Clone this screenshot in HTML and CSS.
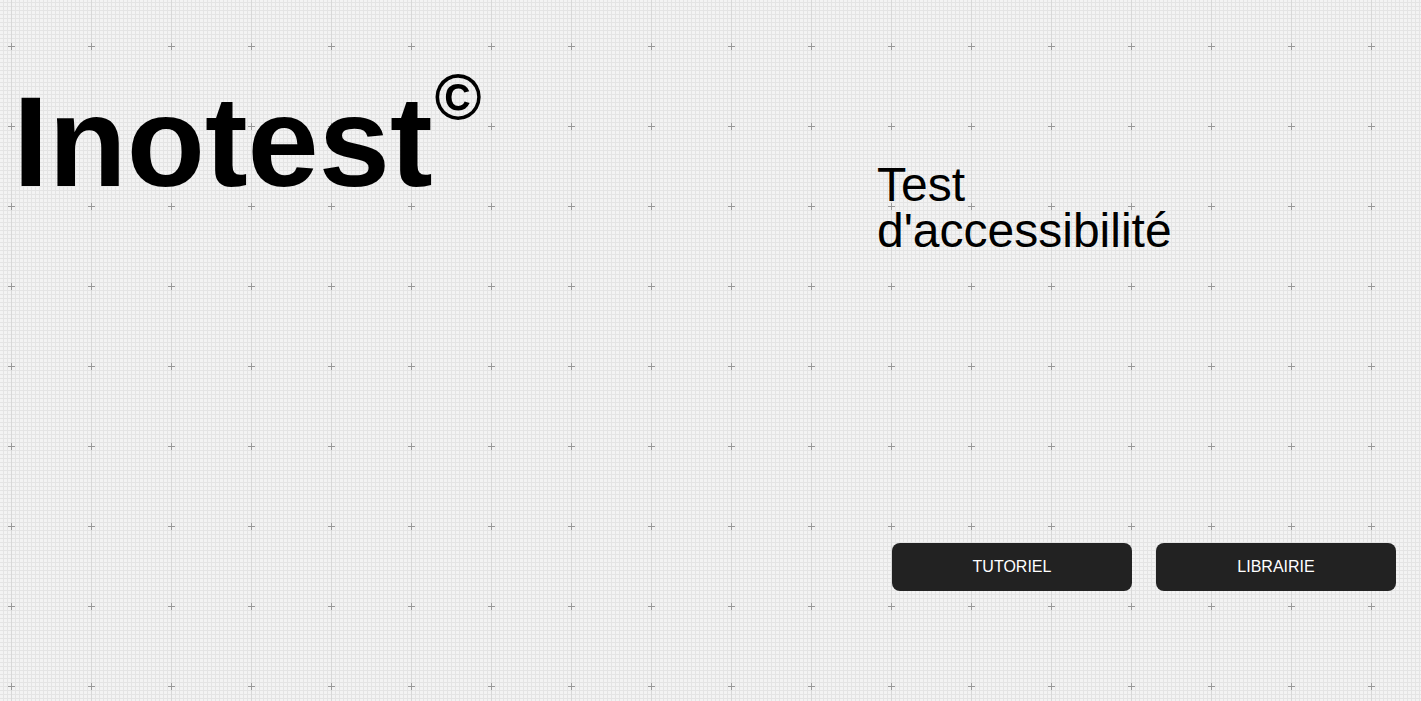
FILE: index.html
```html
<!DOCTYPE html>
<html lang="fr">
<head>
<meta charset="utf-8">
<title>Inotest</title>
<link rel="stylesheet" href="styles.css">
</head>
<body>
<main class="page">
  <section class="brand">
    <h1 class="title">Inotest<span class="copy">©</span></h1>
  </section>
  <section class="side">
    <p class="subtitle"><span class="line">Test</span><span class="line">d'accessibilité</span></p>
    <div class="actions">
      <button class="btn" type="button">TUTORIEL</button>
      <button class="btn" type="button">LIBRAIRIE</button>
    </div>
  </section>
</main>
</body>
</html>
```
FILE: styles.css
```css
html, body {
  margin: 0;
  padding: 0;
  height: 100%;
}

body {
  font-family: "Liberation Sans", Arial, sans-serif;
  color: #000;
  background-color: #f3f3f3;
  background-image:
    url("data:image/svg+xml,%3Csvg xmlns='http://www.w3.org/2000/svg' width='80' height='80'%3E%3Crect x='37' y='40' width='7' height='1' fill='%23999'/%3E%3Crect x='40' y='37' width='1' height='7' fill='%23999'/%3E%3C/svg%3E"),
    linear-gradient(to right, #d8d8d8 1px, transparent 1px),
    linear-gradient(to right, #e4e4e4 1px, transparent 1px),
    linear-gradient(to bottom, #e4e4e4 1px, transparent 1px);
  background-size: 80px 80px, 80px 80px, 4px 4px, 4px 4px;
  background-position: 51px 6px, 11px 0, 3px 0, 0 2px;
  overflow: hidden;
}

.page {
  display: flex;
  height: 701px;
  box-sizing: border-box;
}

.brand {
  width: 877px;
  flex: none;
  padding: 78px 0 0 13px;
  box-sizing: border-box;
}

.title {
  margin: 0;
  font-size: 128px;
  font-weight: 700;
  line-height: 128px;
  letter-spacing: 0;
  white-space: nowrap;
}

.copy {
  margin-left: 2px;
  font-size: 64px;
  font-weight: 700;
  line-height: 0;
  vertical-align: 67px;
}

.side {
  flex: 1;
  display: flex;
  flex-direction: column;
  padding: 162px 25px 110px 0;
  box-sizing: border-box;
}

.subtitle {
  margin: 0;
  font-size: 48px;
  line-height: 46px;
  font-weight: 400;
}

.line {
  display: block;
  height: 46px;
  overflow: visible;
}

.actions {
  margin-top: auto;
  display: flex;
  justify-content: flex-end;
  gap: 24px;
}

.btn {
  width: 240px;
  height: 48px;
  border: 0;
  border-radius: 8px;
  background: #222;
  color: #fff;
  font-family: "Liberation Sans", Arial, sans-serif;
  font-size: 16px;
  padding: 0;
  cursor: pointer;
}
```
